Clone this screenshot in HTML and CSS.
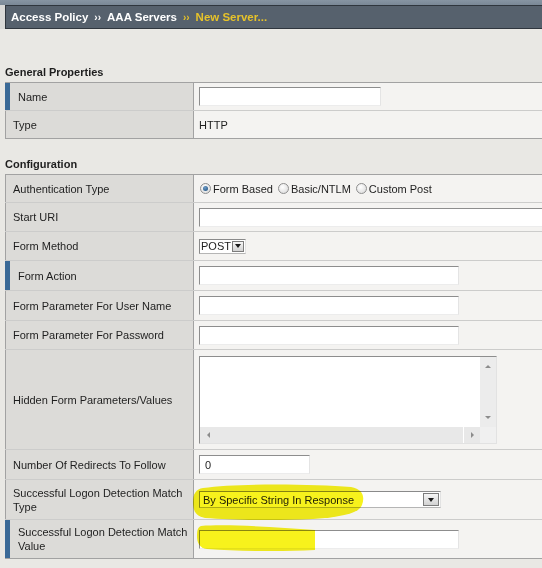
FILE: index.html
```html
<!DOCTYPE html>
<html>
<head>
<meta charset="utf-8">
<link rel="stylesheet" href="styles.css">
</head>
<body>
<div class="topstrip"></div>
<div class="crumbbar">
  <div class="crumb-gutter"></div>
  <div class="crumb">
    <span>Access Policy</span><span class="sep">&rsaquo;&rsaquo;</span><span>AAA Servers</span><span class="sep cur">&rsaquo;&rsaquo;</span><span class="cur">New Server...</span>
  </div>
</div>

<div class="section first">General Properties</div>
<div class="ptable">
  <div class="row r27">
    <div class="label req">Name</div>
    <div class="value"><div class="input w182"></div></div>
  </div>
  <div class="row r28">
    <div class="label">Type</div>
    <div class="value">HTTP</div>
  </div>
</div>

<div class="section second">Configuration</div>
<div class="ptable">
  <div class="row r27">
    <div class="label">Authentication Type</div>
    <div class="value">
      <div class="radios">
        <span class="radio on"></span><span class="rtext">Form Based</span>
        <span class="radio"></span><span class="rtext">Basic/NTLM</span>
        <span class="radio"></span><span class="rtext">Custom Post</span>
      </div>
    </div>
  </div>
  <div class="row r29">
    <div class="label">Start URI</div>
    <div class="value"><div class="input wide"></div></div>
  </div>
  <div class="row r29">
    <div class="label">Form Method</div>
    <div class="value">
      <div class="select sel-post"><span class="sel-text">POST</span><span class="sel-btn"><span class="tri"></span></span></div>
    </div>
  </div>
  <div class="row r30">
    <div class="label req">Form Action</div>
    <div class="value"><div class="input w260"></div></div>
  </div>
  <div class="row r30">
    <div class="label">Form Parameter For User Name</div>
    <div class="value"><div class="input w260"></div></div>
  </div>
  <div class="row r29">
    <div class="label">Form Parameter For Password</div>
    <div class="value"><div class="input w260"></div></div>
  </div>
  <div class="row r100">
    <div class="label">Hidden Form Parameters/Values</div>
    <div class="value">
      <div class="textarea">
        <div class="ta-main"></div>
        <div class="ta-vscroll"><span class="arr up"></span><span class="arr down"></span></div>
        <div class="ta-hscroll"><span class="arr left"></span><span class="thumb-edge"></span><span class="arr right"></span></div>
        <div class="ta-corner"></div>
      </div>
    </div>
  </div>
  <div class="row r30">
    <div class="label">Number Of Redirects To Follow</div>
    <div class="value"><div class="input w111">0</div></div>
  </div>
  <div class="row r40">
    <div class="label">Successful Logon Detection Match Type</div>
    <div class="value">
      <div class="select sel-match"><span class="sel-text">By Specific String In Response</span><span class="sel-btn"><span class="tri"></span></span></div>
      <svg class="hl hl1" width="172" height="37" viewBox="0 0 172 37"><path d="M10,4 C45,-1 120,0 158,3 C170,5 172,13 169,21 C166,29 150,33 120,35 C80,37 40,36 12,34 C2,32 0,26 0,18 C0,10 3,5 10,4 Z"/></svg>
    </div>
  </div>
  <div class="row r39">
    <div class="label req">Successful Logon Detection Match Value</div>
    <div class="value">
      <div class="input w260"></div>
      <svg class="hl hl2" width="118" height="28" viewBox="0 0 118 28"><path d="M4,2 C30,0 80,3 118,6 L118,26 C80,28 40,27 10,25 C2,24 0,18 0,12 C0,6 1,3 4,2 Z"/></svg>
    </div>
  </div>
</div>
</body>
</html>
```
FILE: styles.css
```css
html, body {
  margin: 0;
  padding: 0;
}
html {
  overflow: hidden;
}
body {
  background: #e9e8e4;
  font-family: "Liberation Sans", Arial, sans-serif;
  font-size: 11px;
  color: #1e1e1e;
  width: 542px;
  height: 568px;
  overflow: hidden;
}

.topstrip {
  height: 5px;
  background: linear-gradient(#8795a3, #7a8896);
}
.crumbbar {
  display: flex;
}
.crumb-gutter {
  width: 5px;
  background: #d9d9d7;
}
.crumb {
  flex: 1;
  height: 24px;
  box-sizing: border-box;
  background: #56616d;
  border: 1px solid #2f363e;
  border-right: none;
  padding-left: 5px;
  display: flex;
  align-items: center;
  color: #ffffff;
  font-weight: bold;
  font-size: 11.5px;
  white-space: nowrap;
}
.crumb .sep {
  font-size: 10px;
  margin: 1px 6px 0 6px;
}
.crumb .cur {
  color: #e6c22a;
}

.section {
  height: 20px;
  line-height: 20px;
  padding-left: 5px;
  font-weight: bold;
  font-size: 11px;
  color: #1e1e1e;
}
.section.first {
  margin-top: 33px;
}
.section.second {
  margin-top: 15px;
}

.ptable {
  margin-left: 5px;
  width: 537px;
  border-top: 1px solid #a2a2a2;
  border-bottom: 1px solid #a2a2a2;
}
.row {
  display: grid;
  grid-template-columns: 189px 1fr;
  border-top: 1px solid #cccccb;
  box-sizing: border-box;
}
.row:first-child {
  border-top: none;
}
.r27 { height: 27px; }
.r28 { height: 28px; }
.r29 { height: 29px; }
.r30 { height: 30px; }
.r39 { height: 39px; }
.r40 { height: 40px; }
.r100 { height: 100px; }

.label {
  background: #dcdbd8;
  border-left: 1px solid #a2a2a2;
  border-right: 1px solid #a2a2a2;
  padding: 0 4px 0 7px;
  display: flex;
  align-items: center;
  box-sizing: border-box;
  line-height: 14px;
}
.label.req {
  border-left: 5px solid #3b6a97;
  padding-left: 8px;
}
.value {
  background: #f4f3f1;
  padding-left: 5px;
  display: flex;
  align-items: center;
  position: relative;
  min-width: 0;
}

.input {
  height: 19px;
  box-sizing: border-box;
  background: #ffffff;
  border-top: 1px solid #8d8d8d;
  border-left: 1px solid #8d8d8d;
  border-right: 1px solid #e4e4e4;
  border-bottom: 1px solid #ececec;
  padding-left: 5px;
  display: flex;
  align-items: center;
  flex: none;
}
.w182 { width: 182px; }
.w260 { width: 260px; }
.w111 { width: 111px; }
.wide { width: 343px; border-right: none; }

.radios {
  display: flex;
  align-items: center;
  padding-left: 1px;
}
.radio {
  width: 11px;
  height: 11px;
  box-sizing: border-box;
  border-radius: 50%;
  border: 1px solid #8f8f8f;
  background: radial-gradient(circle at 40% 35%, #ffffff, #d6d6d6);
  position: relative;
  flex: none;
}
.radio.on::after {
  content: "";
  position: absolute;
  left: 2px;
  top: 2px;
  width: 5px;
  height: 5px;
  border-radius: 50%;
  background: radial-gradient(circle at 40% 35%, #6d9cc8, #1b4b78);
}
.rtext {
  margin: 0 5px 0 2px;
}

.select {
  display: flex;
  align-items: center;
  justify-content: space-between;
  background: #ffffff;
  box-sizing: border-box;
  border-top: 1px solid #8a8a8a;
  border-left: 1px solid #8a8a8a;
  border-bottom: 1px solid #b5b5b5;
  border-right: 1px solid #e2e2e2;
  flex: none;
}
.sel-post {
  width: 47px;
  height: 15px;
}
.sel-post .sel-text {
  padding-left: 1px;
}
.sel-post .sel-btn {
  width: 12px;
  height: 11px;
}
.sel-match {
  width: 242px;
  height: 17px;
}
.sel-match .sel-text {
  padding-left: 3px;
}
.sel-match .sel-btn {
  width: 16px;
  height: 13px;
}
.sel-btn {
  box-sizing: border-box;
  border: 1px solid #7c7c7c;
  background: linear-gradient(#f6f6f6, #d2d2d2);
  display: flex;
  align-items: center;
  justify-content: center;
  margin-right: 1px;
}
.tri {
  width: 0;
  height: 0;
  border-left: 3.5px solid transparent;
  border-right: 3.5px solid transparent;
  border-top: 4px solid #1a1a1a;
}

.textarea {
  width: 298px;
  height: 88px;
  box-sizing: border-box;
  display: grid;
  grid-template-columns: 1fr 16px;
  grid-template-rows: 1fr 16px;
  background: #ffffff;
  border-top: 1px solid #8d8d8d;
  border-left: 1px solid #8d8d8d;
  border-right: 1px solid #e2e2e2;
  border-bottom: 1px solid #e2e2e2;
  flex: none;
}
.ta-main {
  background: #ffffff;
}
.ta-vscroll {
  background: #ececec;
  display: flex;
  flex-direction: column;
  align-items: center;
  justify-content: space-between;
  padding: 8px 0 8px;
}
.ta-hscroll {
  background: #e8e8e8;
  display: flex;
  align-items: center;
  padding: 0 6px 0 7px;
  position: relative;
}
.ta-hscroll .thumb-edge {
  width: 1px;
  height: 16px;
  background: #ffffff;
  margin-left: auto;
  margin-right: 7px;
}
.ta-corner {
  background: #f0f0f0;
}
.arr {
  width: 0;
  height: 0;
  flex: none;
}
.arr.up {
  border-left: 3px solid transparent;
  border-right: 3px solid transparent;
  border-bottom: 3px solid #8c8c8c;
}
.arr.down {
  border-left: 3px solid transparent;
  border-right: 3px solid transparent;
  border-top: 3px solid #8c8c8c;
}
.arr.left {
  border-top: 3px solid transparent;
  border-bottom: 3px solid transparent;
  border-right: 3px solid #8c8c8c;
}
.arr.right {
  border-top: 3px solid transparent;
  border-bottom: 3px solid transparent;
  border-left: 3px solid #8c8c8c;
}

.hl {
  position: absolute;
  z-index: 2;
  mix-blend-mode: multiply;
  fill: #f7f21c;
}
.hl1 {
  left: -1px;
  top: 4px;
}
.hl2 {
  left: 3px;
  top: 4px;
}
```
